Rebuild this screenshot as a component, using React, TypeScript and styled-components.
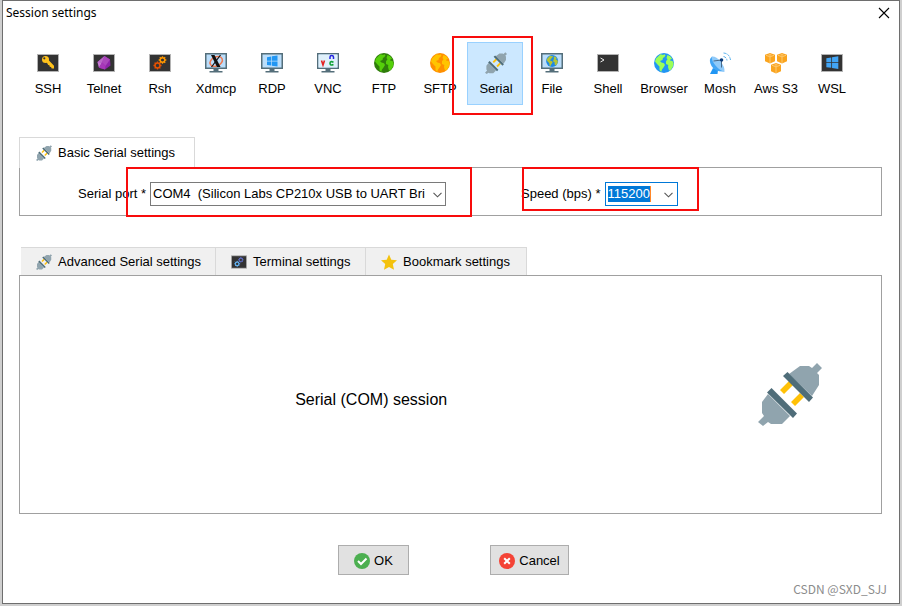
import React, { useEffect, useRef } from "react";
import styled, { createGlobalStyle, css } from "styled-components";

const GlobalStyle = createGlobalStyle`
  *, *::before, *::after { box-sizing: border-box; }
  body {
    margin: 0;
    background: #cfcfcf;
    color: #000;
    font: 13px/16px "Liberation Sans", Arial, sans-serif;
  }
  button, input, select { font: inherit; color: inherit; }
`;

const Desktop = styled.div`
  display: flex;
  min-height: 100vh;
  padding: 0 2px 2px;
`;

const Window = styled.main`
  display: flex;
  flex: 1;
  flex-direction: column;
  min-width: 0;
  border: 1px solid #6e6e6e;
  background: #fff;
`;

const TitleBar = styled.header`
  display: flex;
  align-items: center;
  justify-content: space-between;
  height: 24px;
  padding: 0 9px 0 3px;
`;

const Title = styled.h1`
  margin: 0;
  font: 400 12px/16px "Noto Sans", sans-serif;
`;

const CloseButton = styled.button`
  display: flex;
  padding: 0;
  border: 0;
  background: none;
`;

const Content = styled.div`
  display: flex;
  flex: 1;
  flex-direction: column;
  padding: 17px 17px 0 16px;
`;

const Toolbar = styled.nav`
  display: flex;
`;

const SessionButton = styled.button<{ $active?: boolean }>`
  position: relative;
  display: flex;
  flex: 0 0 56px;
  flex-direction: column;
  align-items: center;
  gap: 7px;
  height: 63px;
  padding: 9px 0 0 2px;
  border: 1px solid ${(p) => (p.$active ? "#99d1ff" : "transparent")};
  background: ${(p) => (p.$active ? "#cce8ff" : "transparent")};
  white-space: nowrap;
`;

const Highlight = styled.span<{ $inset: string }>`
  position: absolute;
  z-index: 1;
  inset: ${(p) => p.$inset};
  border: 2px solid #f80c0c;
  pointer-events: none;
`;

const Section = styled.section<{ $grow?: boolean }>`
  display: flex;
  flex-direction: column;
  flex: ${(p) => (p.$grow ? "1" : "none")};
  margin-top: ${(p) => (p.$grow ? "31px" : "32px")};
`;

const TabList = styled.div<{ $indent?: boolean }>`
  display: flex;
  padding-left: ${(p) => (p.$indent ? "2px" : "0")};
`;

const Tab = styled.button<{ $active?: boolean; $width: number }>`
  display: flex;
  align-items: center;
  gap: 6px;
  height: 28px;
  min-width: ${(p) => p.$width}px;
  padding: 1px 0 0 15px;
  border: solid #d9d9d9;
  border-width: 1px 1px 0 0;
  background: #f0f0f0;
  white-space: nowrap;
  ${(p) =>
    p.$active &&
    css`
      position: relative;
      height: 31px;
      margin-bottom: -1px;
      padding: 0 0 1px 16px;
      border-left-width: 1px;
      background: #fff;
    `}
`;

const Panel = styled.div`
  border: 1px solid #a0a0a0;
`;

const FieldPanel = styled(Panel)`
  display: flex;
  align-items: flex-start;
  gap: 75px;
  height: 49px;
  padding: 14px 0 0 58px;
`;

const Field = styled.div`
  position: relative;
  display: flex;
  align-items: center;
  gap: 4px;
  white-space: nowrap;
`;

const FieldLabel = styled.label<{ $width: number }>`
  min-width: ${(p) => p.$width}px;
  text-align: right;
`;

const SelectBox = styled.div`
  position: relative;
  display: flex;
  width: 296px;
`;

const Select = styled.select`
  appearance: none;
  width: 100%;
  height: 24px;
  padding: 0 20px 0 2px;
  border: 1px solid #7a7a7a;
  border-radius: 0;
  outline: 0;
  background: #fff;
`;

const SelectArrow = styled.span`
  position: absolute;
  top: 10px;
  right: 4px;
  display: flex;
  pointer-events: none;
`;

const Combo = styled.div`
  display: flex;
  align-items: center;
  justify-content: space-between;
  width: 73px;
  height: 24px;
  padding: 0 4px 0 2px;
  border: 1px solid #0078d7;
`;

const ComboInput = styled.input`
  width: 43px;
  height: 16px;
  padding: 0;
  border: 0;
  border-right: 1px solid #ff8728;
  outline: 0;
  background: #fff;
  &::selection { background: #0078d7; color: #fff; }
`;

const ComboArrow = styled.button`
  display: flex;
  padding: 2px 0 0;
  border: 0;
  background: none;
`;

const SessionPanel = styled(Panel)`
  display: grid;
  flex: 1;
  grid-template-columns: 704fr 159fr;
  align-items: center;
  min-height: 200px;
`;

const SessionTitle = styled.h2`
  margin: 0;
  padding-top: 10px;
  font-size: 16px;
  font-weight: 400;
  line-height: 20px;
  text-align: center;
`;

const SessionArt = styled.div`
  display: flex;
  padding: 0 0 1px 36px;
`;

const Footer = styled.footer`
  display: flex;
  justify-content: center;
  gap: 81px;
  margin-top: 31px;
  padding-left: 6px;
`;

const ActionButton = styled.button<{ $width: number }>`
  display: flex;
  align-items: center;
  justify-content: center;
  gap: 4px;
  min-width: ${(p) => p.$width}px;
  height: 30px;
  padding: 1px 8px 0;
  border: 1px solid #adadad;
  background: #e1e1e1;
`;

const Watermark = styled.small`
  padding-right: 12px;
  color: #8c8c8c;
  font: 12px/28px "Noto Sans CJK SC", sans-serif;
  text-align: right;
`;

const Icon = ({ size = 22, box = 22, children }: { size?: number; box?: number; children: React.ReactNode }) => (
  <svg width={size} height={size} viewBox={`0 0 ${box} ${box}`} aria-hidden="true">
    {children}
  </svg>
);

const Frame = () => <rect x="0.5" y="2.5" width="21" height="17" fill="#333" stroke="#b4b4b4" />;

const Monitor = () => (
  <>
    <path d="M0 1h22v16H0z" fill="#546e7a" />
    <path d="M1.5 2.5h19v13h-19z" fill="#bbdefb" />
    <path d="M8.500 17h5v2h4v1.500h-13V19h4z" fill="#546e7a" />
  </>
);

const Plug = ({ size }: { size: number }) => (
  <Icon size={size} box={64}>
    <path
      fill="#90a4ae"
      d="M31 12 42 4h9l3 2 5-5 5 5-5 5 2 2v10l-7 11zM10 32l-6 8v11l2 3-6 6 5 4 5-4 3 2h11l8-8z"
    />
    <path fill="#ffc107" d="m31 19 4 4-9 9-4-4zM42 31l4 4-9 9-4-4z" />
    <path fill="#4f6d79" d="m25 14 4.500-4L55 35.500 51 40zM9 30.500l4.500-4.500L39 51.500 35 56z" />
  </Icon>
);

const Globe = ({ sea, land }: { sea: string; land: string }) => (
  <>
    <circle cx="11" cy="11" r="10" fill={sea} />
    <path
      fill={land}
      d="M7.500 2.200 10 3l1.500-.8 1 1.300-1.500 2-1 .3L9.500 8 7 9l1.500 1.500 2.500.8 1 1.700-1.500 2.500L9 17.500 8.200 20 6.500 18v-3.500L4 12 2 9.500l1-3zM14.500 3l3 1.500 2 3-1.500-.7-1 1.700 2.500.5 1.200 2.500-1 3.500-2 3-1.700.5-1-3.500.3-2-2.300-1L13 9.200l1.500-2-1-1.200z"
    />
  </>
);

const gearTeeth = "M0-4.500V4.500M-4.500 0H4.500M-3.200-3.200 3.200 3.200M3.200-3.200-3.200 3.200";

const Gears = ({ upper, lower, fill }: { upper: string; lower: string; fill: string }) => (
  <>
    {[
      { x: 13.5, y: 8, c: upper, s: 0.85 },
      { x: 8.5, y: 13.5, c: lower, s: 0.9 },
    ].map((g) => (
      <g key={g.x} transform={`translate(${g.x} ${g.y}) scale(${g.s})`}>
        <path d={gearTeeth} stroke={g.c} strokeWidth="1.500" />
        <circle r="2.700" fill={fill} stroke={g.c} strokeWidth="1.700" />
      </g>
    ))}
  </>
);

const WindowsMark = ({ color }: { color: string }) => (
  <path fill={color} d="M6 6.200 10.300 5.500v4.200H6zM11 5.300l5.500-.8v5.200H11zM6 10.400h4.300v4.200L6 14zM11 10.400h5.500v5.200l-5.500-.8z" />
);

const Cube = ({ x, y }: { x: number; y: number }) => (
  <g transform={`translate(${x} ${y})`}>
    <path d="m5 0 5 1.800v6.400L5 10.500 0 8.200V1.800z" fill="#faa41e" />
    <path d="m1 2.300 4 1.500 4-1.500M5 4v6" fill="none" stroke="#ffe0a6" strokeWidth="0.600" />
    <path d="M3 1.900 5 1.200l2 .7-2 .7z" fill="#ffd58b" />
  </g>
);

const sessions: { name: string; icon: React.ReactNode }[] = [
  {
    name: "SSH",
    icon: (
      <Icon>
        <Frame />
        <g fill="#ffc21c">
          <path d="m9 9 2-1.500 6 6.300v2.700h-2.300l-.7-1.500-1.300-.3-.3-1.400-1.200-.3z" />
          <circle cx="8.500" cy="7.500" r="3.500" />
        </g>
        <circle cx="7.300" cy="6.300" r="1.100" fill="#333" />
      </Icon>
    ),
  },
  {
    name: "Telnet",
    icon: (
      <Icon>
        <Frame />
        <path d="m11.500 4 5.500 3.500.5 6L12 17.500l-6-1.700L4.500 10z" fill="#8e24aa" />
        <path d="M11.500 4 9 10.500l3.500 3.500L17 7.500z" fill="#ab47bc" />
        <path d="M11.500 4 4.500 10l4.500.5z" fill="#ba68c8" />
        <path d="M4.500 10 9 10.500 6 15.800z" fill="#c77bd4" />
        <path d="m9 10.500 3.500 3.500-.5 3.500-6-1.700z" fill="#a737b9" />
      </Icon>
    ),
  },
  { name: "Rsh", icon: <Icon><Frame /><Gears upper="#ff9800" lower="#e65100" fill="#333" /></Icon> },
  {
    name: "Xdmcp",
    icon: (
      <Icon>
        <Monitor />
        <ellipse cx="11" cy="9.500" rx="6.500" ry="4.500" fill="none" stroke="#f07850" strokeWidth="1.500" transform="rotate(-25 11 9)" />
        <path d="M6 3h3.500l6 12H12z" fill="#111" />
        <path d="M15.500 3 6.500 15" stroke="#111" strokeWidth="1.200" />
      </Icon>
    ),
  },
  { name: "RDP", icon: <Icon><Monitor /><g transform="translate(0 -1)"><WindowsMark color="#2196f3" /></g></Icon> },
  {
    name: "VNC",
    icon: (
      <Icon>
        <Monitor />
        <path d="M1.500 2.500h19v13h-19z" fill="#dff0fb" />
        <path d="m4.500 8.500 1.500 4.500 1.500-4.500" fill="none" stroke="#e32222" strokeWidth="1.600" />
        <path d="M13 7V5q0-1.500 1.700-1.500T16.500 5v2" fill="none" stroke="#2424df" strokeWidth="1.500" />
        <path d="M16.500 10.200q-3.500-1.500-3.500 1.100t3.500 1.200" fill="none" stroke="#12a339" strokeWidth="1.600" />
      </Icon>
    ),
  },
  { name: "FTP", icon: <Icon><Globe sea="#2f7d0b" land="#55cf0a" /></Icon> },
  { name: "SFTP", icon: <Icon><Globe sea="#ff8f00" land="#ffc400" /></Icon> },
  { name: "Serial", icon: <Plug size={22} /> },
  {
    name: "File",
    icon: (
      <Icon>
        <Monitor />
        <g transform="translate(4.500 2.500) scale(.6)"><Globe sea="#1e88e5" land="#b5c435" /></g>
      </Icon>
    ),
  },
  { name: "Shell", icon: <Icon><Frame /><path d="m3.500 6 3.500 2-3.500 2" fill="none" stroke="#eee" /></Icon> },
  { name: "Browser", icon: <Icon><Globe sea="#2196f3" land="#9cff57" /></Icon> },
  {
    name: "Mosh",
    icon: (
      <Icon>
        <path d="m4 16 5 2-.5 4H1z" fill="#2196f3" />
        <path d="M3 4.500Q-1 8 2.500 14t13 5.500z" fill="#42a5f5" />
        <path d="M3 4.500Q7 4 11.500 9.500t4 10Q11 19 6.500 13.500T3 4.500z" fill="#90caf9" />
        <path d="m4.500 9 8-1v7.500" fill="none" stroke="#496987" />
        <circle cx="12.500" cy="8" r="1.800" fill="#0d3d7b" />
        <path d="M14.500 4.500q3 .5 3.500 4M14.500 1q6 .5 7 7" fill="none" stroke="#5ab3ee" strokeDasharray="3 1" />
      </Icon>
    ),
  },
  { name: "Aws S3", icon: <Icon><Cube x={0} y={1} /><Cube x={12} y={1} /><Cube x={6} y={11} /></Icon> },
  { name: "WSL", icon: <Icon><Frame /><g transform="translate(-1.500 -.800) scale(1.140)"><WindowsMark color="#42a5f5" /></g></Icon> },
];

const Chevron = () => (
  <svg width="9" height="6" viewBox="0 0 9 6" aria-hidden="true">
    <path d="m.5.800 4 4 4-4" fill="none" stroke="#555" strokeWidth="1.100" />
  </svg>
);

export default function App() {
  const speed = useRef<HTMLInputElement>(null);

  useEffect(() => {
    speed.current?.focus();
    speed.current?.select();
  }, []);

  return (
    <Desktop>
      <GlobalStyle />
      <Window>
        <TitleBar>
          <Title>Session settings</Title>
          <CloseButton aria-label="Close">
            <svg width="12" height="12" viewBox="0 0 12 12" aria-hidden="true">
              <path d="m1 1 10 10M11 1 1 11" stroke="#000" strokeWidth="1.100" />
            </svg>
          </CloseButton>
        </TitleBar>
        <Content>
          <Toolbar aria-label="Session type">
            {sessions.map(({ name, icon }) => (
              <SessionButton key={name} $active={name === "Serial"} aria-pressed={name === "Serial"}>
                {icon}
                {name}
                {name === "Serial" && <Highlight $inset="-7px -11px -11px -16px" />}
              </SessionButton>
            ))}
          </Toolbar>

          <Section>
            <TabList role="tablist">
              <Tab role="tab" aria-selected $active $width={176}>
                <Plug size={16} />
                Basic Serial settings
              </Tab>
            </TabList>
            <FieldPanel>
              <Field>
                <FieldLabel htmlFor="port" $width={68}>Serial port *</FieldLabel>
                <SelectBox>
                  <Select id="port">
                    <option>COM4 &nbsp;(Silicon Labs CP210x USB to UART Bridge (COM4))</option>
                  </Select>
                  <SelectArrow><Chevron /></SelectArrow>
                </SelectBox>
                <Highlight $inset="-15px -26px -11px 48px" />
              </Field>
              <Field>
                <FieldLabel htmlFor="speed" $width={78}>Speed (bps) *</FieldLabel>
                <Combo>
                  <ComboInput id="speed" ref={speed} defaultValue="115200" />
                  <ComboArrow aria-label="Show speeds"><Chevron /></ComboArrow>
                </Combo>
                <Highlight $inset="-15px -21px -5px 1px" />
              </Field>
            </FieldPanel>
          </Section>

          <Section $grow>
            <TabList role="tablist" $indent>
              <Tab role="tab" $width={195}>
                <Plug size={16} />
                Advanced Serial settings
              </Tab>
              <Tab role="tab" $width={150}>
                <Icon size={16}><Frame /><Gears upper="#5c6bc0" lower="#64b5f6" fill="#333" /></Icon>
                Terminal settings
              </Tab>
              <Tab role="tab" $width={161}>
                <Icon size={16} box={16}>
                  <path fill="#f4c20d" d="m8 .500 2.300 5.200 5.700.6-4.200 3.800 1.200 5.600L8 12.900l-5 2.800 1.200-5.600L0 6.300l5.700-.6z" />
                </Icon>
                Bookmark settings
              </Tab>
            </TabList>
            <SessionPanel>
              <SessionTitle>Serial (COM) session</SessionTitle>
              <SessionArt><Plug size={64} /></SessionArt>
            </SessionPanel>
          </Section>

          <Footer>
            <ActionButton $width={71}>
              <Icon size={16} box={16}>
                <circle cx="8" cy="8" r="8" fill="#4caf50" />
                <path d="m4 8 3 3 5.500-5.500" fill="none" stroke="#fff" strokeWidth="2" />
              </Icon>
              OK
            </ActionButton>
            <ActionButton $width={79}>
              <Icon size={16} box={16}>
                <circle cx="8" cy="8" r="8" fill="#f44336" />
                <path d="m5.200 5.200 5.600 5.600m0-5.600-5.600 5.600" stroke="#fff" strokeWidth="2" />
              </Icon>
              Cancel
            </ActionButton>
          </Footer>
        </Content>
        <Watermark>CSDN @SXD_SJJ</Watermark>
      </Window>
    </Desktop>
  );
}
